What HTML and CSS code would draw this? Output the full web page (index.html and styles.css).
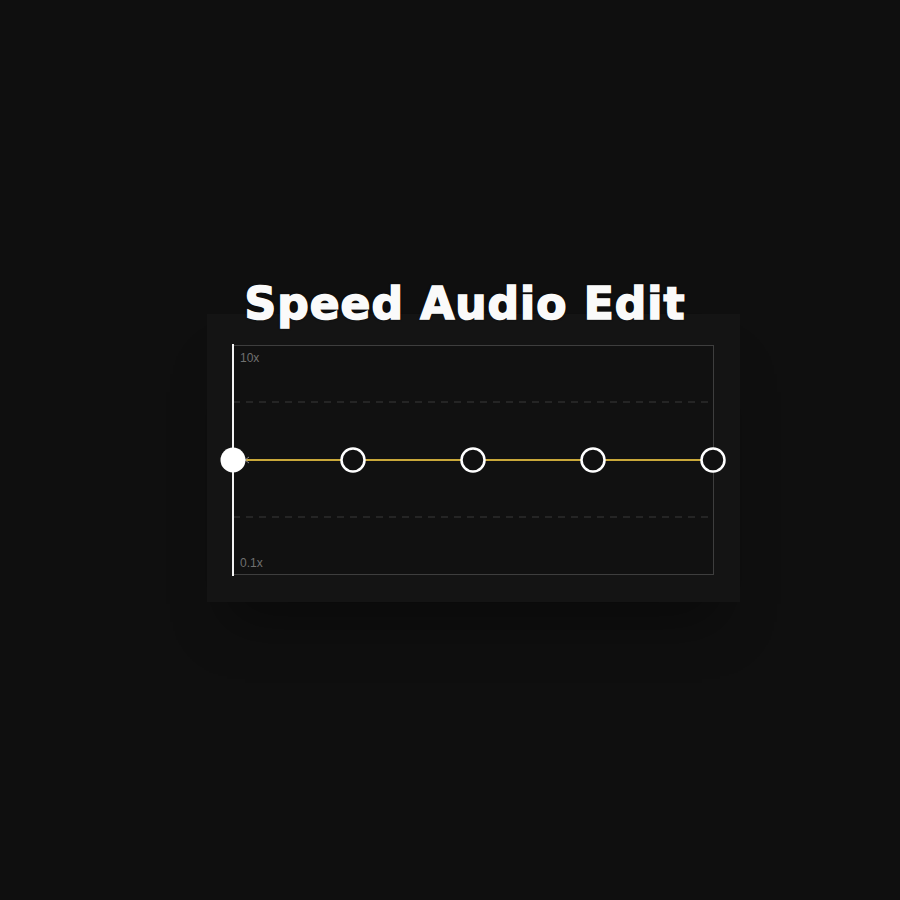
FILE: index.html
```html
<!doctype html>
<html>
    <head>
        <title>Speed Audio Edit</title>
        <link rel="stylesheet" href="styles.css">
    </head>
    <body>
        <div class="stage">
            <h1 class="title">Speed Audio Edit</h1>
            <div class="panel">
                <div class="chart">
                    <span class="label label_top">10x</span>
                    <span class="label label_bottom">0.1x</span>
                    <svg class="curve" width="481" height="230" viewBox="0 0 481 230">
                        <line x1="0" y1="57" x2="481" y2="57" class="grid"/>
                        <line x1="0" y1="172" x2="481" y2="172" class="grid"/>
                        <line x1="0" y1="115" x2="480" y2="115" class="speed"/>
                        <path d="M16 112 L12 115 L16 118" class="arrow"/>
                        <line x1="0" y1="-1" x2="0" y2="231" class="cursor"/>
                        <circle cx="0" cy="115" r="12.5" class="point_on"/>
                        <circle cx="120" cy="115" r="11.5" class="point"/>
                        <circle cx="240" cy="115" r="11.5" class="point"/>
                        <circle cx="360" cy="115" r="11.5" class="point"/>
                        <circle cx="480" cy="115" r="11.5" class="point"/>
                    </svg>
                </div>
            </div>
        </div>
    </body>
</html>
```

FILE: styles.css
```css
html, body {
    height: 100%;
}
body {
    margin: 0;
    padding: 0;
    background-color: #0f0f0f;
    font-family: 'Liberation Sans', Arial, sans-serif;
}
.stage {
    width: 533px;
    margin-left: 207px;
    padding-top: 280px;
}
.title {
    position: relative;
    z-index: 2;
    margin: 0 0 -14px 0;
    padding-right: 17px;
    text-align: center;
    font-family: 'DejaVu Sans', sans-serif;
    font-weight: bold;
    font-size: 44px;
    line-height: 48px;
    letter-spacing: 1px;
    color: #fafafa;
    -webkit-text-stroke: 1.6px #fafafa;
    text-shadow: 0 0 3px rgba(0, 0, 0, 0.9);
}
.panel {
    background-color: #141414;
    padding: 31px 26px 27px 26px;
    box-shadow: 0 40px 50px -20px rgba(0, 0, 0, 0.35);
}
.chart {
    position: relative;
    width: 481px;
    height: 230px;
    box-sizing: border-box;
    border: 1px solid #3e3e3e;
    background-color: #111111;
}
.label {
    position: absolute;
    left: 6px;
    font-size: 12px;
    color: #707070;
}
.label_top {
    top: 5px;
}
.label_bottom {
    bottom: 4px;
}
.curve {
    position: absolute;
    left: -1px;
    top: -1px;
    overflow: visible;
}
.grid {
    stroke: #3a3a3a;
    stroke-width: 1;
    stroke-dasharray: 7 6;
}
.speed {
    stroke: #c9a83a;
    stroke-width: 2;
}
.arrow {
    fill: none;
    stroke: #8a8a8a;
    stroke-width: 1;
}
.cursor {
    stroke: #f2f2f2;
    stroke-width: 2;
}
.point {
    fill: #111111;
    stroke: #ffffff;
    stroke-width: 2.5;
}
.point_on {
    fill: #ffffff;
}
```
